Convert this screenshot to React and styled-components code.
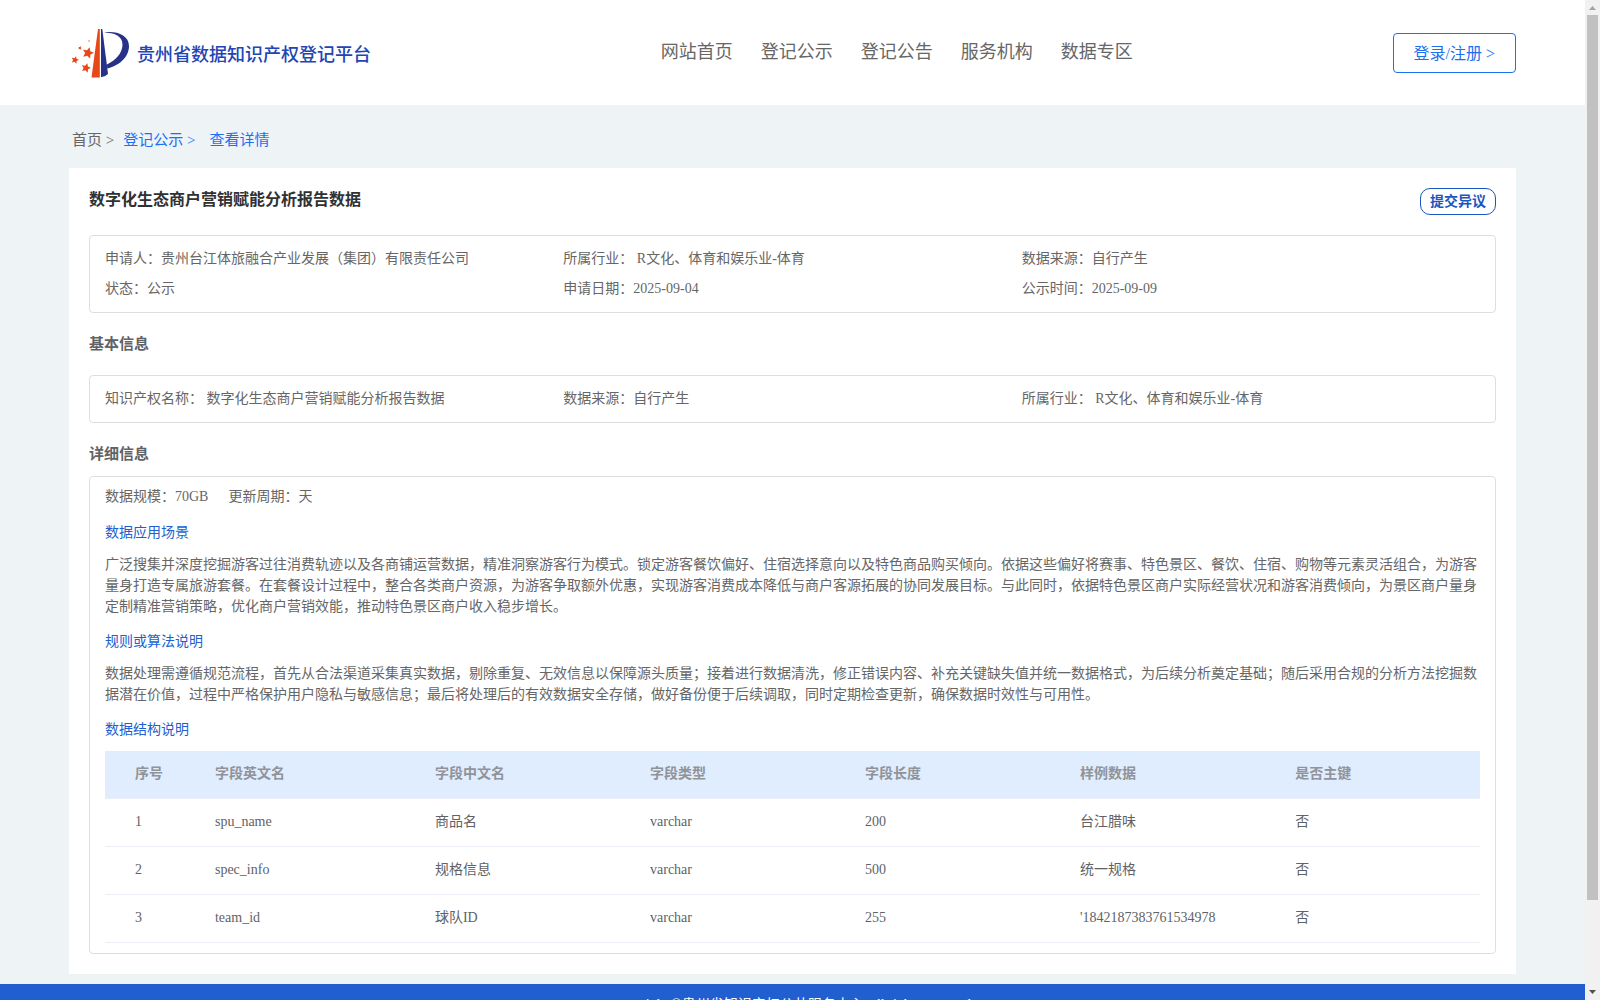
import styled, { createGlobalStyle } from "styled-components";

const GlobalStyle = createGlobalStyle`
  * {
    box-sizing: border-box;
  }
  body {
    margin: 0;
    color: #606266;
    font-family: "Liberation Serif", "Noto Sans CJK SC", serif;
    font-size: 14px;
    line-height: 20px;
  }
  a {
    color: inherit;
    text-decoration: none;
  }
`;

const Window = styled.div`
  display: flex;
  height: 100vh;
  overflow: hidden;
`;

const Page = styled.div`
  flex: 1;
  min-width: 0;
  overflow: hidden;
  background-color: #eef3f6;
`;

const Scrollbar = styled.div`
  display: flex;
  flex-direction: column;
  align-items: center;
  width: 15px;
  background-color: #f1f1f1;
`;

const Arrow = styled.svg`
  display: block;
  width: 15px;
  height: 15px;
  fill: ${(props) => (props.$muted ? "#a3a3a3" : "#505050")};
`;

const Track = styled.div`
  flex: 1;
  width: 11px;
`;

const Thumb = styled.div`
  height: 91.2%;
  background-color: #c1c1c1;
`;

const Header = styled.header`
  display: flex;
  align-items: center;
  justify-content: space-between;
  height: 105px;
  padding: 0 69px;
  background-color: #fff;
`;

const Brand = styled.a`
  display: flex;
  align-items: center;
  gap: 8px;
  padding: 0 2px 0 3px;
`;

const Logo = styled.svg`
  display: block;
  width: 57px;
  height: 50px;
`;

const BrandName = styled.span`
  padding-top: 4px;
  color: #2245b5;
  font-size: 18px;
  font-weight: 500;
  line-height: 24px;
`;

const Nav = styled.nav`
  display: flex;
  padding-bottom: 2px;
`;

const NavLink = styled.a`
  margin-left: 28px;
  color: #666;
  font-size: 18px;
  line-height: 24px;
`;

const LoginButton = styled.button`
  height: 40px;
  padding: 0 20px 2px;
  border: 1px solid #1b70ee;
  border-radius: 4px;
  background-color: #fff;
  color: #1b70ee;
  font-family: inherit;
  font-size: 16px;
`;

const Main = styled.main`
  padding: 0 69px 10px;
`;

const Breadcrumb = styled.nav`
  display: flex;
  align-items: center;
  height: 63px;
  padding: 6px 3px 0;
  font-size: 15px;
`;

const Crumb = styled.a`
  margin-right: ${(props) => props.$gap || 0}px;
  color: ${(props) => (props.$active ? "#1b70f5" : "#666")};
`;

const Panel = styled.section`
  padding: 20px;
  background-color: #fff;
`;

const PanelHead = styled.div`
  display: flex;
  justify-content: space-between;
  height: 47px;
`;

const Title = styled.h1`
  margin: 0;
  color: #303133;
  font-size: 16px;
  line-height: 24px;
`;

const ObjectionButton = styled.button`
  height: 27px;
  padding: 0 9px 4px;
  border: 1px solid #1a56c0;
  border-radius: 10px;
  background-color: #fff;
  color: #1a56c0;
  font-family: inherit;
  font-size: 14px;
  font-weight: 700;
`;

const SectionTitle = styled.h2`
  margin: 0;
  padding: ${(props) => props.$padding};
  color: #606266;
  font-size: 15px;
  line-height: 20px;
`;

const Box = styled.div`
  padding: 8px 15px ${(props) => props.$bottom || 8}px;
  border: 1px solid #dcdee0;
  border-radius: 4px;
  color: #666;
`;

const InfoGrid = styled.div`
  display: grid;
  grid-template-columns: repeat(3, 1fr);
`;

const Info = styled.div`
  line-height: 30px;
`;

const Summary = styled.div`
  display: flex;
  gap: 20px;
  line-height: 23px;
`;

const SubTitle = styled.h3`
  margin: 15px 0 11px;
  color: #205fcf;
  font-size: 14px;
  font-weight: 400;
  line-height: 20px;
`;

const Paragraph = styled.p`
  margin: 0;
  line-height: 21px;
`;

const Table = styled.table`
  width: 100%;
  border-collapse: collapse;
  color: #606266;
  table-layout: fixed;
`;

const Col = styled.col`
  width: ${(props) => props.$width};
`;

const Th = styled.th`
  height: 47px;
  padding: 0 10px;
  border-bottom: 1px solid #ebeef5;
  background-color: #e0edff;
  color: #909399;
  text-align: left;

  &:first-child {
    padding-left: 30px;
  }
`;

const Td = styled.td`
  height: 48px;
  padding: 0 10px;
  border-bottom: 1px solid #ebeef5;

  &:first-child {
    padding-left: 30px;
  }
`;

const Footer = styled.footer`
  padding: 10px 0;
  background-color: #215fd0;
  color: #fff;
  line-height: 22px;
  text-align: center;
`;

const navItems = ["网站首页", "登记公示", "登记公告", "服务机构", "数据专区"];

const overview = [
  ["申请人：", "贵州台江体旅融合产业发展（集团）有限责任公司"],
  ["所属行业：", " R文化、体育和娱乐业-体育"],
  ["数据来源：", "自行产生"],
  ["状态：", "公示"],
  ["申请日期：", "2025-09-04"],
  ["公示时间：", "2025-09-09"],
];

const basics = [
  ["知识产权名称：", " 数字化生态商户营销赋能分析报告数据"],
  ["数据来源：", "自行产生"],
  ["所属行业：", " R文化、体育和娱乐业-体育"],
];

const columns = [
  ["序号", "7.27%"],
  ["字段英文名", "16%"],
  ["字段中文名", "15.64%"],
  ["字段类型", "15.64%"],
  ["字段长度", "15.64%"],
  ["样例数据", "15.64%"],
  ["是否主键", "auto"],
];

const rows = [
  ["1", "spu_name", "商品名", "varchar", "200", "台江腊味", "否"],
  ["2", "spec_info", "规格信息", "varchar", "500", "统一规格", "否"],
  ["3", "team_id", "球队ID", "varchar", "255", "'1842187383761534978", "否"],
];

const stars = [
  [16, 25, 6],
  [3, 32, 4],
  [14, 40, 5],
  [8, 20, 2],
  [17, 13, 1],
];

const starPoints = (cx, cy, r) =>
  Array.from({ length: 10 }, (_, i) => {
    const radius = i % 2 ? r * 0.48 : r;
    const angle = (i * Math.PI) / 5 - 1.3;
    return `${cx + radius * Math.cos(angle)},${cy + radius * Math.sin(angle)}`;
  }).join(" ");

const InfoList = ({ items }) => (
  <InfoGrid>
    {items.map(([label, value]) => (
      <Info key={label}>
        {label}
        {value}
      </Info>
    ))}
  </InfoGrid>
);

const App = () => (
  <>
    <GlobalStyle />
    <Window>
      <Page>
        <Header>
          <Brand href="#">
            <Logo viewBox="0 0 57 50" aria-hidden="true">
              {stars.map(([x, y, r]) => (
                <polygon
                  key={`${x}-${y}`}
                  points={starPoints(x, y, r)}
                  fill="#e84817"
                />
              ))}
              <path d="M26 1h1.800v48.500h-8.300Z" fill="#e84817" />
              <path d="M29 1h1.300l5.700 45q-3.200 3-7 3.300Z" fill="#28318a" />
              <path
                d="M32 4.500C44 2.500 57 7 57 18C57 30 46 38 35.300 40.500L34.800 36.500C44 32 50.500 25 50.500 16.500C50.500 8 42 4.500 32 4.500Z"
                fill="#28318a"
              />
            </Logo>
            <BrandName>贵州省数据知识产权登记平台</BrandName>
          </Brand>
          <Nav>
            {navItems.map((item) => (
              <NavLink key={item} href="#">
                {item}
              </NavLink>
            ))}
          </Nav>
          <LoginButton type="button">登录/注册 &gt;</LoginButton>
        </Header>

        <Main>
          <Breadcrumb>
            <Crumb href="#" $gap={9}>
              首页 &gt;
            </Crumb>
            <Crumb href="#" $active $gap={14}>
              登记公示 &gt;
            </Crumb>
            <Crumb href="#" $active>
              查看详情
            </Crumb>
          </Breadcrumb>

          <Panel>
            <PanelHead>
              <Title>数字化生态商户营销赋能分析报告数据</Title>
              <ObjectionButton type="button">提交异议</ObjectionButton>
            </PanelHead>
            <Box>
              <InfoList items={overview} />
            </Box>

            <SectionTitle $padding="21px 0">基本信息</SectionTitle>
            <Box>
              <InfoList items={basics} />
            </Box>

            <SectionTitle $padding="21px 0 12px">详细信息</SectionTitle>
            <Box $bottom={10}>
              <Summary>
                <span>数据规模：70GB</span>
                <span>更新周期：天</span>
              </Summary>
              <SubTitle>数据应用场景</SubTitle>
              <Paragraph>
                广泛搜集并深度挖掘游客过往消费轨迹以及各商铺运营数据，精准洞察游客行为模式。锁定游客餐饮偏好、住宿选择意向以及特色商品购买倾向。依据这些偏好将赛事、特色景区、餐饮、住宿、购物等元素灵活组合，为游客量身打造专属旅游套餐。在套餐设计过程中，整合各类商户资源，为游客争取额外优惠，实现游客消费成本降低与商户客源拓展的协同发展目标。与此同时，依据特色景区商户实际经营状况和游客消费倾向，为景区商户量身定制精准营销策略，优化商户营销效能，推动特色景区商户收入稳步增长。
              </Paragraph>
              <SubTitle>规则或算法说明</SubTitle>
              <Paragraph>
                数据处理需遵循规范流程，首先从合法渠道采集真实数据，剔除重复、无效信息以保障源头质量；接着进行数据清洗，修正错误内容、补充关键缺失值并统一数据格式，为后续分析奠定基础；随后采用合规的分析方法挖掘数据潜在价值，过程中严格保护用户隐私与敏感信息；最后将处理后的有效数据安全存储，做好备份便于后续调取，同时定期检查更新，确保数据时效性与可用性。
              </Paragraph>
              <SubTitle>数据结构说明</SubTitle>
              <Table>
                <colgroup>
                  {columns.map(([name, width]) => (
                    <Col key={name} $width={width} />
                  ))}
                </colgroup>
                <thead>
                  <tr>
                    {columns.map(([name]) => (
                      <Th key={name} scope="col">
                        {name}
                      </Th>
                    ))}
                  </tr>
                </thead>
                <tbody>
                  {rows.map((row) => (
                    <tr key={row[0]}>
                      {row.map((cell, index) => (
                        <Td key={columns[index][0]}>{cell}</Td>
                      ))}
                    </tr>
                  ))}
                </tbody>
              </Table>
            </Box>
          </Panel>
        </Main>

        <Footer>
          copyright ©贵州省知识产权公共服务中心&nbsp; all rights reserved
        </Footer>
      </Page>

      <Scrollbar aria-hidden="true">
        <Arrow $muted viewBox="0 0 15 15">
          <path d="M4 10h7L7.500 6Z" />
        </Arrow>
        <Track>
          <Thumb />
        </Track>
        <Arrow viewBox="0 0 15 15">
          <path d="M4 5h7L7.500 9Z" />
        </Arrow>
      </Scrollbar>
    </Window>
  </>
);

export default App;
